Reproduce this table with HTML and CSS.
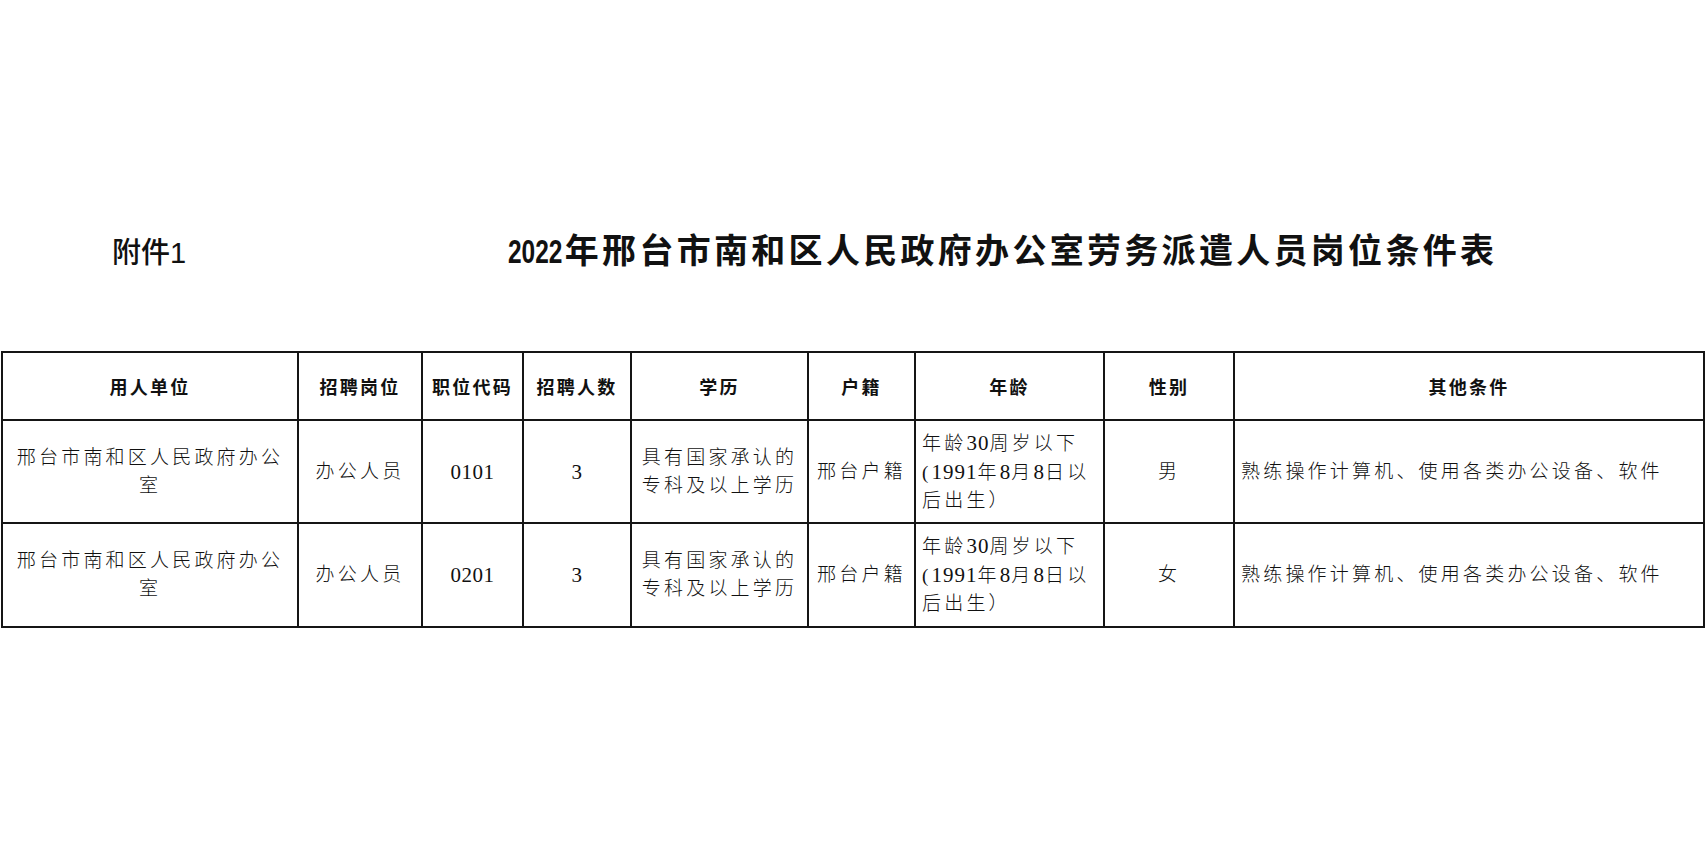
FILE: index.html
```html
<!DOCTYPE html>
<html lang="zh-CN">
<head>
<meta charset="utf-8">
<title>2022年邢台市南和区人民政府办公室劳务派遣人员岗位条件表</title>
<link rel="stylesheet" href="styles.css">
</head>
<body>
<div class="page">
  <div class="heading">
    <div class="annex">附件<span class="narrow">1</span></div>
    <h1 class="title"><span class="year">2022</span>年邢台市南和区人民政府办公室劳务派遣人员岗位条件表</h1>
  </div>
  <table class="grid">
    <colgroup>
      <col class="c1"><col class="c2"><col class="c3"><col class="c4"><col class="c5"><col class="c6"><col class="c7"><col class="c8"><col class="c9">
    </colgroup>
    <thead>
      <tr class="head-row">
        <th>用人单位</th>
        <th>招聘岗位</th>
        <th>职位代码</th>
        <th>招聘人数</th>
        <th>学历</th>
        <th>户籍</th>
        <th>年龄</th>
        <th>性别</th>
        <th>其他条件</th>
      </tr>
    </thead>
    <tbody>
      <tr class="data-row">
        <td class="unit">邢台市南和区人民政府办公室</td>
        <td>办公人员</td>
        <td class="num">0101</td>
        <td class="num">3</td>
        <td class="edu">具有国家承认的专科及以上学历</td>
        <td>邢台户籍</td>
        <td class="age">年龄<span class="d">30</span>周岁以下<br>(<span class="d">1991</span>年<span class="d">8</span>月<span class="d">8</span>日以<br>后出生）</td>
        <td>男</td>
        <td class="other">熟练操作计算机、使用各类办公设备、软件</td>
      </tr>
      <tr class="data-row last">
        <td class="unit">邢台市南和区人民政府办公室</td>
        <td>办公人员</td>
        <td class="num">0201</td>
        <td class="num">3</td>
        <td class="edu">具有国家承认的专科及以上学历</td>
        <td>邢台户籍</td>
        <td class="age">年龄<span class="d">30</span>周岁以下<br>(<span class="d">1991</span>年<span class="d">8</span>月<span class="d">8</span>日以<br>后出生）</td>
        <td>女</td>
        <td class="other">熟练操作计算机、使用各类办公设备、软件</td>
      </tr>
    </tbody>
  </table>
</div>
</body>
</html>
```

FILE: styles.css
```css
html, body {
  margin: 0;
  padding: 0;
  background: #ffffff;
}

body {
  font-family: "Liberation Serif", "Noto Sans CJK SC", serif;
  color: #111111;
}

.page {
  padding-top: 227px;
}

.heading {
  display: flex;
  align-items: baseline;
  padding-left: 112px;
  height: 44px;
}

.annex {
  font-family: "Noto Sans CJK SC", sans-serif;
  font-size: 29px;
  font-weight: 500;
  line-height: 44px;
  letter-spacing: 0;
}

.narrow {
  font-family: "Liberation Sans", sans-serif;
}

.title {
  margin: 0 0 0 322px;
  font-family: "Noto Sans CJK SC", sans-serif;
  font-size: 34px;
  font-weight: 700;
  line-height: 44px;
  letter-spacing: 3.3px;
}

.year {
  display: inline-block;
  font-family: "Liberation Sans", sans-serif;
  letter-spacing: 0;
  transform: scaleX(0.72);
  transform-origin: 0 50%;
  margin-right: -19px;
}

.grid {
  margin-top: 80px;
  margin-left: 1px;
  width: 1703px;
  table-layout: fixed;
  border-collapse: collapse;
}

.c1 { width: 296px; }
.c2 { width: 124px; }
.c3 { width: 101px; }
.c4 { width: 108px; }
.c5 { width: 177px; }
.c6 { width: 107px; }
.c7 { width: 189px; }
.c8 { width: 130px; }
.c9 { width: 470px; }

.grid th,
.grid td {
  border: 2px solid #151515;
  padding: 0 6px;
  text-align: center;
  vertical-align: middle;
}

.grid th {
  font-family: "Noto Sans CJK SC", sans-serif;
  font-size: 18px;
  font-weight: 700;
  letter-spacing: 2.2px;
}

.head-row {
  height: 68px;
}

.data-row {
  height: 103px;
}

.data-row.last {
  height: 104px;
}

.grid td {
  font-size: 19px;
  font-weight: 300;
  line-height: 28px;
  letter-spacing: 3.2px;
}

.grid td.num {
  letter-spacing: 0.5px;
  font-size: 21px;
}

.grid td.age {
  text-align: left;
}

.grid td.other {
  text-align: left;
}

.d {
  letter-spacing: 1px;
  font-size: 21px;
}
```
